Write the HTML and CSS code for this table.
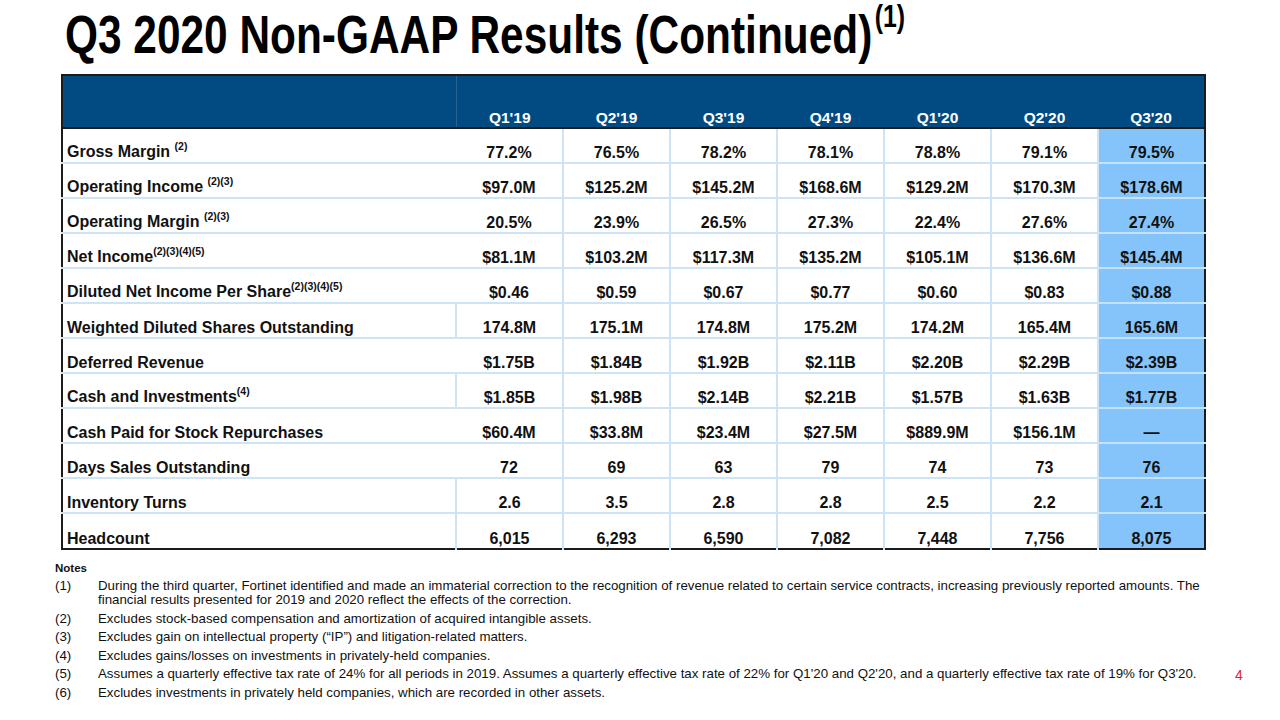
FILE: index.html
```html
<!DOCTYPE html>
<html>
<head>
<meta charset="utf-8">
<link rel="stylesheet" href="styles.css">
</head>
<body>
<div class="slide">
  <h1 class="title"><span class="title-text">Q3 2020 Non-GAAP Results (Continued)<sup>(1)</sup></span></h1>
  <table class="results">
    <colgroup>
      <col class="c-label"><col class="c-num"><col class="c-num"><col class="c-num"><col class="c-num"><col class="c-num"><col class="c-num"><col class="c-num">
    </colgroup>
    <thead>
      <tr>
        <th class="label"></th><th>Q1'19</th><th>Q2'19</th><th>Q3'19</th><th>Q4'19</th><th>Q1'20</th><th>Q2'20</th><th>Q3'20</th>
      </tr>
    </thead>
    <tbody>
      <tr><td class="label">Gross Margin <sup>(2)</sup></td><td>77.2%</td><td>76.5%</td><td>78.2%</td><td>78.1%</td><td>78.8%</td><td>79.1%</td><td class="hl">79.5%</td></tr>
      <tr><td class="label">Operating Income <sup>(2)(3)</sup></td><td>$97.0M</td><td>$125.2M</td><td>$145.2M</td><td>$168.6M</td><td>$129.2M</td><td>$170.3M</td><td class="hl">$178.6M</td></tr>
      <tr><td class="label">Operating Margin <sup>(2)(3)</sup></td><td>20.5%</td><td>23.9%</td><td>26.5%</td><td>27.3%</td><td>22.4%</td><td>27.6%</td><td class="hl">27.4%</td></tr>
      <tr><td class="label">Net Income<sup>(2)(3)(4)(5)</sup></td><td>$81.1M</td><td>$103.2M</td><td>$117.3M</td><td>$135.2M</td><td>$105.1M</td><td>$136.6M</td><td class="hl">$145.4M</td></tr>
      <tr><td class="label">Diluted Net Income Per Share<sup>(2)(3)(4)(5)</sup></td><td>$0.46</td><td>$0.59</td><td>$0.67</td><td>$0.77</td><td>$0.60</td><td>$0.83</td><td class="hl">$0.88</td></tr>
      <tr><td class="label sep">Weighted Diluted Shares Outstanding</td><td>174.8M</td><td>175.1M</td><td>174.8M</td><td>175.2M</td><td>174.2M</td><td>165.4M</td><td class="hl">165.6M</td></tr>
      <tr><td class="label">Deferred Revenue</td><td>$1.75B</td><td>$1.84B</td><td>$1.92B</td><td>$2.11B</td><td>$2.20B</td><td>$2.29B</td><td class="hl">$2.39B</td></tr>
      <tr><td class="label sep">Cash and Investments<sup>(4)</sup></td><td>$1.85B</td><td>$1.98B</td><td>$2.14B</td><td>$2.21B</td><td>$1.57B</td><td>$1.63B</td><td class="hl">$1.77B</td></tr>
      <tr><td class="label">Cash Paid for Stock Repurchases</td><td>$60.4M</td><td>$33.8M</td><td>$23.4M</td><td>$27.5M</td><td>$889.9M</td><td>$156.1M</td><td class="hl">—</td></tr>
      <tr><td class="label">Days Sales Outstanding</td><td>72</td><td>69</td><td>63</td><td>79</td><td>74</td><td>73</td><td class="hl">76</td></tr>
      <tr><td class="label sep">Inventory Turns</td><td>2.6</td><td>3.5</td><td>2.8</td><td>2.8</td><td>2.5</td><td>2.2</td><td class="hl">2.1</td></tr>
      <tr class="last"><td class="label sep">Headcount</td><td>6,015</td><td>6,293</td><td>6,590</td><td>7,082</td><td>7,448</td><td>7,756</td><td class="hl">8,075</td></tr>
    </tbody>
  </table>
  <div class="notes">
    <div class="notes-title">Notes</div>
    <ol class="note-list">
      <li><span class="num">(1)</span><span class="txt">During the third quarter, Fortinet identified and made an immaterial correction to the recognition of revenue related to certain service contracts, increasing previously reported amounts. The financial results presented for 2019 and 2020 reflect the effects of the correction.</span></li>
      <li><span class="num">(2)</span><span class="txt">Excludes stock-based compensation and amortization of acquired intangible assets.</span></li>
      <li><span class="num">(3)</span><span class="txt">Excludes gain on intellectual property (“IP”) and litigation-related matters.</span></li>
      <li><span class="num">(4)</span><span class="txt">Excludes gains/losses on investments in privately-held companies.</span></li>
      <li><span class="num">(5)</span><span class="txt">Assumes a quarterly effective tax rate of 24% for all periods in 2019. Assumes a quarterly effective tax rate of 22% for Q1'20 and Q2'20, and a quarterly effective tax rate of 19% for Q3'20.</span></li>
      <li><span class="num">(6)</span><span class="txt">Excludes investments in privately held companies, which are recorded in other assets.</span></li>
    </ol>
  </div>
  <div class="page-num">4</div>
</div>
</body>
</html>
```

FILE: styles.css
```css
* { box-sizing: border-box; }
html, body { margin: 0; padding: 0; background: #fff; }
body { font-family: "Liberation Sans", Arial, sans-serif; color: #000; }

.slide {
  position: relative;
  width: 1280px;
  height: 720px;
  overflow: hidden;
}

.title {
  margin: 0;
  padding: 6px 0 0 65px;
  height: 74px;
  font-family: "Liberation Sans", Arial, sans-serif;
  font-weight: bold;
  font-size: 53px;
  line-height: 58px;
  color: #000;
  white-space: nowrap;
}
.title-text {
  display: inline-block;
  transform: scaleX(0.8);
  transform-origin: left center;
}
.title sup {
  font-size: 31px;
  vertical-align: 0;
  position: relative;
  top: -26px;
  margin-left: 3px;
}

.results {
  margin-left: 61px;
  width: 1143px;
  border-collapse: collapse;
  border: 2px solid #1b1b1b;
  table-layout: fixed;
  font-weight: bold;
  font-size: 16px;
}
.c-label { width: 394px; }
.c-num { width: 107px; }

.results thead th {
  background: #024b82;
  color: #fff;
  height: 53px;
  vertical-align: bottom;
  padding: 0 0 2px;
  line-height: 14px;
  font-size: 15.5px;
  text-align: center;
  border-bottom: 2px solid #1b1b1b;
}
.results thead th.label { border-right: 1px solid #2a6296; }

.results td {
  height: 35px;
  vertical-align: bottom;
  padding: 0 0 2px;
  line-height: 14px;
  text-align: center;
  border-bottom: 2px solid #cde4f6;
  border-left: 2px solid #cde4f6;
  color: #111;
}
.results tr.last td { border-bottom: none; height: 36px; padding-bottom: 2px; }
.results td.label {
  text-align: left;
  padding-left: 4px;
  border-left: none;
}
.results td.label + td { border-left: none; }
.results td.label.sep { border-right: 2px solid #cde4f6; }
.results td.hl {
  background: #84c4fb;
  border-bottom-color: #c4e2fb;
  border-left-color: #cde4f6;
}
.results sup {
  font-size: 10.5px;
  vertical-align: 0;
  position: relative;
  top: -7px;
}

.notes {
  padding: 11px 0 0 55px;
  font-size: 13.3px;
  color: #111;
}
.notes-title {
  font-weight: bold;
  font-size: 11.5px;
  line-height: 14px;
  margin-bottom: 4px;
}
.note-list {
  list-style: none;
  margin: 0;
  padding: 0;
  width: 1160px;
}
.note-list li {
  display: flex;
  line-height: 14px;
  margin-bottom: 4.5px;
}
.note-list .num { width: 43px; flex: none; }
.note-list .txt { flex: 1; }

.page-num {
  position: absolute;
  left: 1235px;
  top: 667px;
  font-size: 14px;
  color: #d8282c;
}
```
